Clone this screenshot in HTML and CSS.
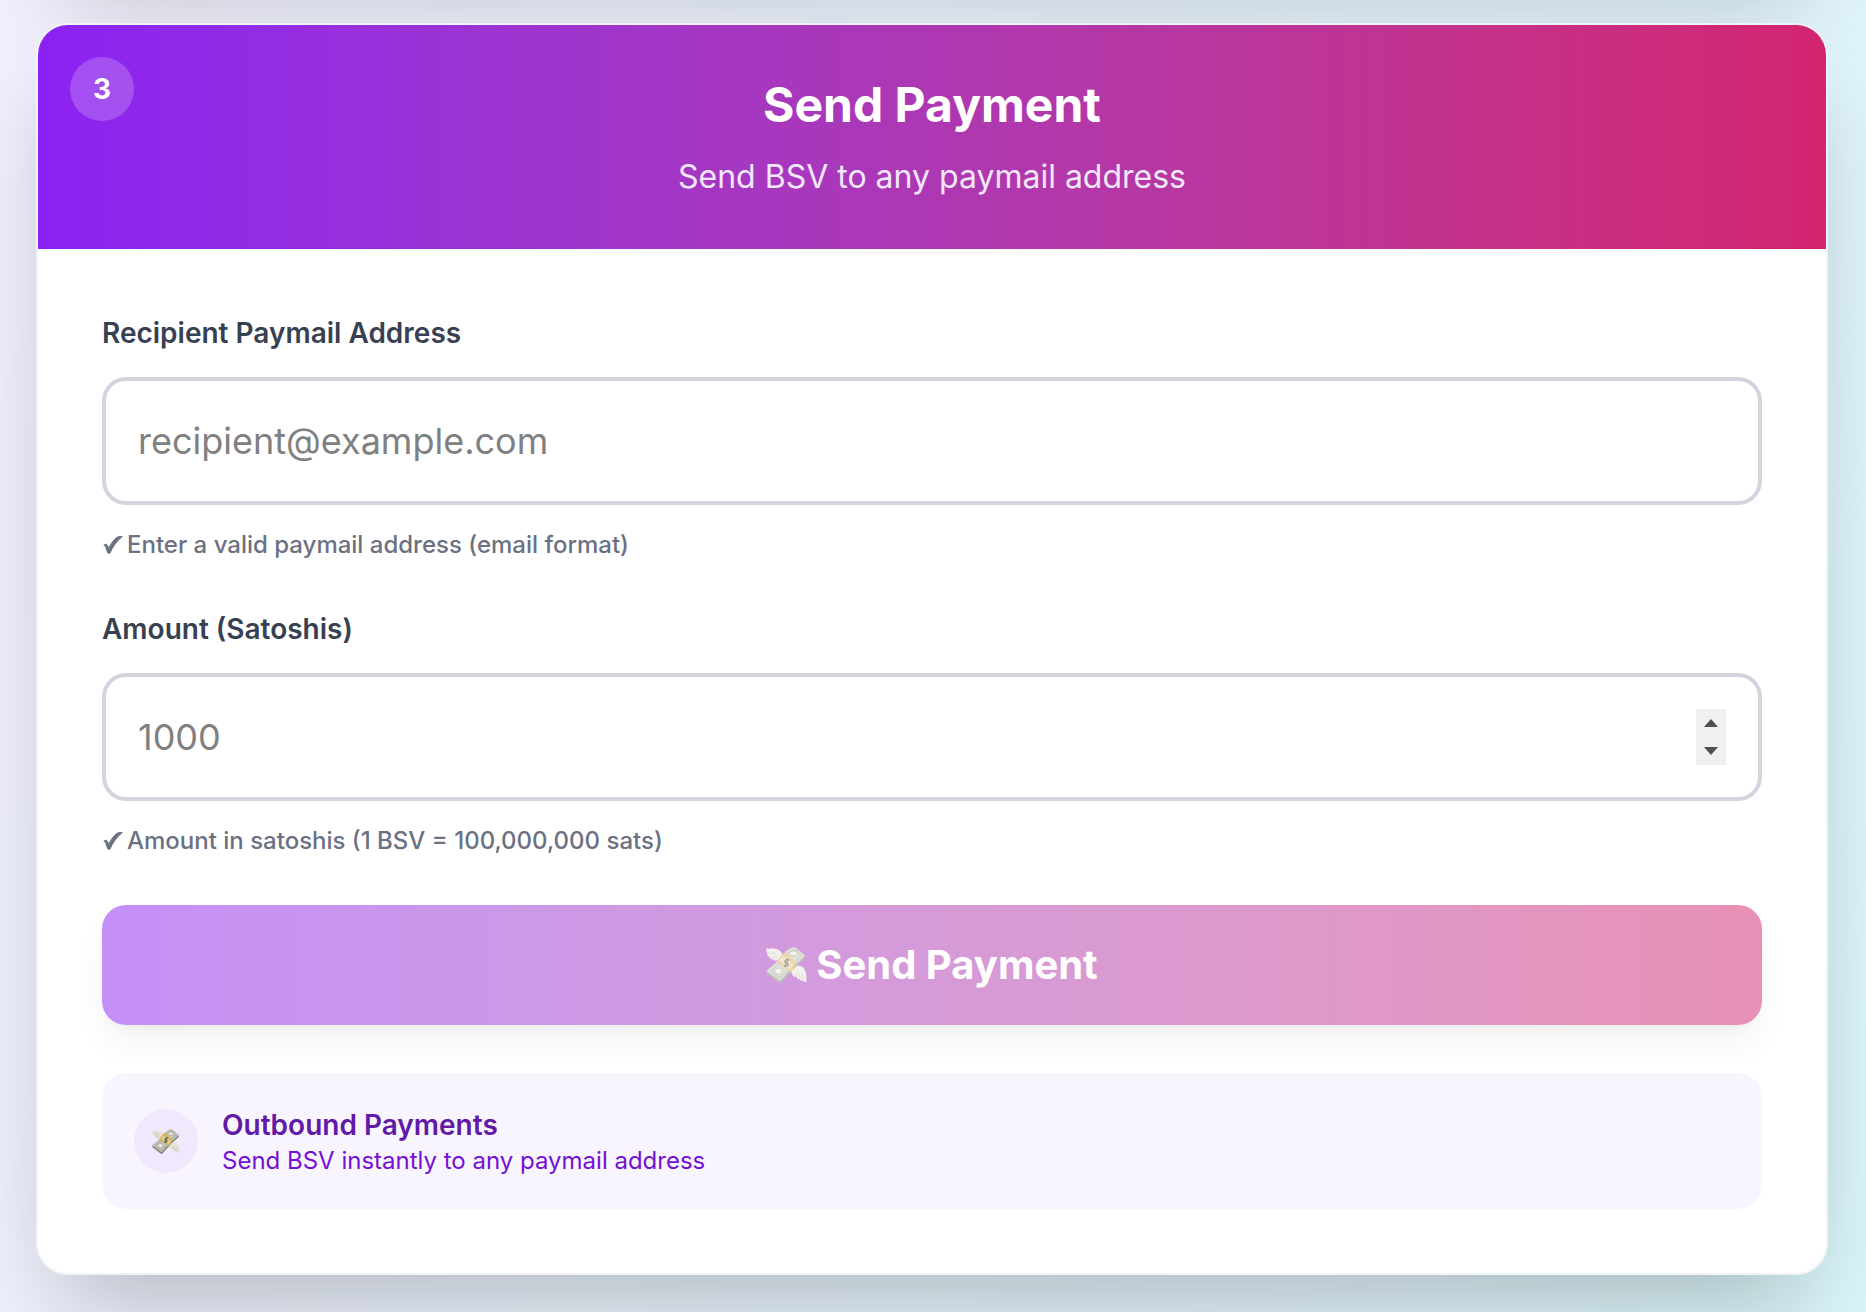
FILE: index.html
```html
<!DOCTYPE html>
<html lang="en">
<head>
<meta charset="utf-8">
<title>Send Payment</title>
<link rel="stylesheet" href="styles.css">
</head>
<body>
<svg class="defs" aria-hidden="true">
  <defs>
    <symbol id="money-wings" viewBox="0 0 41 36">
      <path d="M.3 1.500C5 2 7 .8 11 2.300c3 1 5 3 5.500 5.700L13 13c-2 .8-5 .8-6.500-.7-1.800 0-3-1-3.300-2.500C1.500 9 .8 7.500 1.300 6 .3 4.800 0 3 .3 1.500Z" fill="#e6e5dd"/>
      <path d="M1.500 6c2.500.8 5 .6 8-.2M3.300 9.800c2.200.4 4.500.2 7-.8M6.500 12.300c1.800 0 3-.5 4.500-1.300" fill="none" stroke="#b7b7ab" stroke-width=".9"/>
      <path d="m25 25 3.500-6c3.500-1 7.500-.2 9.500 2.500 2.500 3.500 2.500 8.500 2.500 13.500-1.600.2-2.600-.3-3.300-1.300-1.500.4-2.700-.2-3.300-1.500-1.700.3-2.900-.5-3.400-2.200C28 30 26 28 25 25Z" fill="#e6e5dd"/>
      <path d="M37.200 33.700c.3-3-.4-5.500-2-8M33.900 32.200c.2-2.700-.6-4.700-2.200-6.700M30.500 30c-.1-2-.8-3.300-2-4.500" fill="none" stroke="#b7b7ab" stroke-width=".9"/>
      <path d="M.5 24 14 12C18 6 22 1 29 .3L39 8.500v2.800L28.500 21 15 35.800h-2L.8 26.500Z" fill="#7f8178"/>
      <path d="M.5 24 14 12C18 6 22 1 29 .3L39 8.500 27.500 19.500 14 33.800Z" fill="#c3c5b8"/>
      <path d="M4.500 24.300 15 15c4-6 8-11 14-12.200l6.500 5.700L26 18 13.800 31Z" fill="none" stroke="#94988a" stroke-width="1"/>
      <ellipse cx="27.500" cy="6.500" rx="4" ry="2.600" fill="#e6e8de" stroke="#939888" stroke-width=".8"/>
      <ellipse cx="12.500" cy="24" rx="4" ry="3" fill="#e6e8de" stroke="#939888" stroke-width=".8"/>
      <path d="m15.500 8 3-2L30 16l-4.500 9.500L10.500 14.500Z" fill="#e0ad3c"/>
      <path d="M17 8.500 27.800 17.500l-3.600 5.300L13.300 14Z" fill="#d8cda4"/>
      <path d="M22.300 13.800c-1-1.900-3.600-.9-3.400.8.2 1.900 3.200.9 3.400 2.800.1 1.800-2.900 2.400-3.900.6M22.500 12l-4 7.800" fill="none" stroke="#4f4a3b" stroke-width="1.400"/>
    </symbol>
    <symbol id="check" viewBox="0 0 20 18">
      <path d="M.8 9.300C2 8 3.500 7.800 4.300 9.200l1.400 3C8.500 6.500 12.500 1.300 16 .5c1.200-.2 2.300-.2 3.400-.1C14 4.800 9.700 10.700 7 17c-.6.600-1.800.6-2.300-.2L2.800 11.500C2.400 10.200 1.800 9.500.8 9.300Z" fill="currentColor" stroke="currentColor" stroke-width=".9" stroke-linejoin="round"/>
    </symbol>
  </defs>
</svg>
<div class="page">
  <section class="card card-previous"></section>
  <section class="card">
    <header class="card-header">
      <span class="step">3</span>
      <h2 class="title">Send Payment</h2>
      <p class="subtitle">Send BSV to any paymail address</p>
    </header>
    <div class="card-body">
      <div class="field">
        <label class="label" for="recipient">Recipient Paymail Address</label>
        <div class="control"><input class="input" id="recipient" type="email" placeholder="recipient@example.com"></div>
        <p class="hint"><svg class="check"><use href="#check"/></svg>Enter a valid paymail address (email format)</p>
      </div>
      <div class="field">
        <label class="label" for="amount">Amount (Satoshis)</label>
        <div class="control">
          <input class="input" id="amount" type="text" inputmode="numeric" placeholder="1000">
          <span class="spinner"><i class="arrow arrow-up"></i><i class="arrow arrow-down"></i></span>
        </div>
        <p class="hint"><svg class="check"><use href="#check"/></svg>Amount in satoshis (1 BSV = 100,000,000 sats)</p>
      </div>
      <button class="send" type="button" disabled><svg class="send-icon"><use href="#money-wings"/></svg><span>Send Payment</span></button>
      <div class="info">
        <span class="info-badge"><svg class="info-icon"><use href="#money-wings"/></svg></span>
        <div>
          <p class="info-title">Outbound Payments</p>
          <p class="info-text">Send BSV instantly to any paymail address</p>
        </div>
      </div>
    </div>
  </section>
</div>
</body>
</html>
```
FILE: styles.css
```css
* { box-sizing: border-box; margin: 0; padding: 0; }

body {
  height: 1312px;
  overflow: hidden;
  background: linear-gradient(108deg, #f2f0fd 0%, #ebf3fd 40%, #e3f4fc 75%, #daf6fa 100%);
  font-family: Inter, "Liberation Sans", sans-serif;
}

.defs { display: block; width: 0; height: 0; }

.page {
  display: flex;
  flex-direction: column;
  gap: 64px;
  margin-top: -641px;
  padding: 0 38px 0 36px;
}

.card {
  flex: none;
  overflow: hidden;
  background: #fff;
  border: 2px solid #f1f4f6;
  border-radius: 32px;
  box-shadow: 0 50px 100px -24px rgba(0, 0, 0, .25);
}

.card-previous { height: 600px; }

.card-header {
  position: relative;
  padding: 48px;
  text-align: center;
  background: linear-gradient(to right in oklab, #8b21f2, #d3246f);
}

.step {
  position: absolute;
  top: 32px;
  left: 32px;
  width: 64px;
  height: 64px;
  border-radius: 50%;
  background: rgba(255, 255, 255, .2);
  color: #fff;
  font-size: 28px;
  font-weight: 700;
  line-height: 64px;
}

.title { margin-bottom: 16px; color: #fff; font-size: 48px; font-weight: 700; line-height: 64px; }
.subtitle { color: #f1e7fe; font-size: 32px; line-height: 48px; }

.card-body { display: flex; flex-direction: column; gap: 48px; padding: 64px; }

.label { display: block; margin-bottom: 24px; color: #384152; font-size: 28px; font-weight: 600; line-height: 40px; }

.control {
  display: flex;
  align-items: center;
  height: 128px;
  padding: 0 32px;
  border: 4px solid #d2d5dd;
  border-radius: 24px;
}

.input {
  flex: 1;
  min-width: 0;
  height: 56px;
  border: 0;
  outline: 0;
  background: none;
  color: #101828;
  font: 36px/56px Inter, "Liberation Sans", sans-serif;
}
.input::placeholder { color: #808080; opacity: 1; }

.spinner {
  display: flex;
  flex-direction: column;
  align-items: center;
  justify-content: space-between;
  width: 30px;
  height: 56px;
  padding: 10px 0;
  background: #f0f0f0;
}
.arrow { width: 14px; height: 8px; background: #505050; }
.arrow-up { clip-path: polygon(50% 0, 100% 100%, 0 100%); }
.arrow-down { clip-path: polygon(0 0, 100% 0, 50% 100%); }

.hint {
  display: flex;
  align-items: center;
  gap: 4px;
  margin-top: 24px;
  padding-left: 1px;
  color: #6b7182;
  font-size: 24px;
  font-weight: 500;
  line-height: 32px;
}
.check { width: 20px; height: 18px; overflow: visible; }

.send {
  display: flex;
  align-items: center;
  justify-content: center;
  gap: 9px;
  height: 120px;
  border: 0;
  border-radius: 24px;
  background: linear-gradient(to right in oklab, #8b21f2, #d3246f);
  box-shadow: 0 20px 30px -6px rgba(0, 0, 0, .1), 0 8px 12px -8px rgba(0, 0, 0, .1);
  color: #fff;
  font: 700 40px/56px Inter, "Liberation Sans", sans-serif;
  opacity: .5;
}
.send-icon { width: 41px; height: 36px; }

.info {
  display: flex;
  align-items: center;
  gap: 24px;
  padding: 32px;
  border-radius: 24px;
  background: #f8f5fe;
}
.info-badge {
  display: flex;
  align-items: center;
  justify-content: center;
  width: 64px;
  height: 64px;
  border-radius: 50%;
  background: #f1e8fd;
}
.info-icon { width: 28px; height: 25px; }
.info-title { color: #6319a8; font-size: 28px; font-weight: 600; line-height: 40px; }
.info-text { color: #7410d3; font-size: 24px; line-height: 32px; }
```
